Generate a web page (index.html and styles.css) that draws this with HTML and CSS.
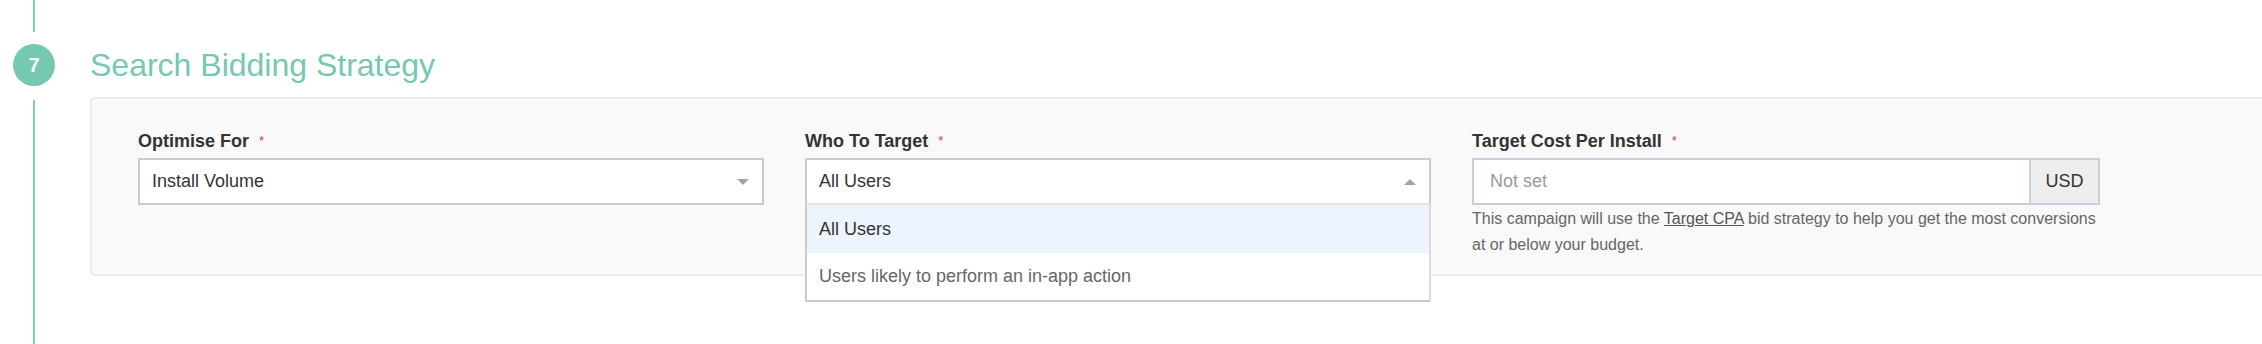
FILE: index.html
```html
<!DOCTYPE html>
<html lang="en">
<head>
  <meta charset="UTF-8">
  <meta name="viewport" content="width=device-width, initial-scale=1.0">
  <title>Search Bidding Strategy</title>
  <link rel="stylesheet" href="styles.css">
</head>
<body>
  <div class="step">
    <div class="rail">
      <span class="rail-line rail-line-top"></span>
      <span class="step-num">7</span>
      <span class="rail-line"></span>
    </div>

    <div class="step-body">
      <h2 class="step-title">Search Bidding Strategy</h2>

      <div class="panel">
        <div class="field">
          <label class="field-label">Optimise For <span class="req">*</span></label>
          <div class="select">
            <span class="select-value">Install Volume</span>
            <span class="caret"></span>
          </div>
        </div>

        <div class="field">
          <label class="field-label">Who To Target <span class="req">*</span></label>
          <div class="select open">
            <span class="select-value">All Users</span>
            <span class="caret up"></span>
            <ul class="menu">
              <li class="menu-item active">All Users</li>
              <li class="menu-item">Users likely to perform an in-app action</li>
            </ul>
          </div>
        </div>

        <div class="field">
          <label class="field-label">Target Cost Per Install <span class="req">*</span></label>
          <div class="input-group">
            <input type="text" class="input" placeholder="Not set">
            <span class="addon">USD</span>
          </div>
          <p class="hint">
            <span>This campaign will use the <a href="#" class="hint-link">Target CPA</a> bid strategy to help you get the most conversions</span>
            <span>at or below your budget.</span>
          </p>
        </div>
      </div>
    </div>
  </div>
</body>
</html>
```

FILE: styles.css
```css
:root {
  --teal: #76c8b2;
  --text: #333;
  --muted: #666;
  --field-border: #cbcbcb;
  --group-border: #c9cedb;
}

body {
  margin: 0;
  background: #fff;
  font-family: "Liberation Sans", Arial, sans-serif;
  color: var(--text);
  overflow: hidden;
}

.step {
  display: flex;
  min-height: 100vh;
}

/* Timeline rail */
.rail {
  width: 68px;
  display: flex;
  flex-direction: column;
  align-items: center;
  flex-shrink: 0;
}

.rail-line {
  width: 2px;
  flex: 1;
  background: #80cbb7;
}

.rail-line-top {
  flex: 0 0 32px;
}

.step-num {
  width: 42px;
  height: 42px;
  margin: 12px 0 14px;
  border-radius: 50%;
  background: var(--teal);
  color: #fff;
  font-size: 20px;
  font-weight: bold;
  display: flex;
  align-items: center;
  justify-content: center;
}

.step-body {
  flex: 1;
  margin-left: 22px;
  padding-top: 47px;
}

.step-title {
  margin: 0 0 14px;
  font-size: 32px;
  font-weight: normal;
  line-height: 36px;
  color: var(--teal);
}

/* Panel */
.panel {
  display: grid;
  grid-template-columns: 626px 626px 628px;
  column-gap: 41px;
  align-items: start;
  padding: 32px 0 16px 46px;
  background: #f9f9f9;
  border: 2px solid #ebebeb;
  border-right: 0;
  border-radius: 5px 0 0 5px;
}

.field-label {
  display: block;
  font-size: 18px;
  font-weight: bold;
  line-height: 20px;
  margin-bottom: 7px;
  color: var(--text);
}

.req {
  color: #d9413a;
  font-size: 13px;
  font-weight: normal;
  vertical-align: top;
  margin-left: 5px;
}

.select {
  position: relative;
  height: 47px;
  box-sizing: border-box;
  display: flex;
  align-items: center;
  justify-content: space-between;
  padding: 0 13px 0 12px;
  background: #fff;
  border: 2px solid var(--field-border);
  font-size: 18px;
}

.select.open {
  border-bottom-color: #e4e4e4;
}

.caret {
  width: 0;
  height: 0;
  border-left: 6px solid transparent;
  border-right: 6px solid transparent;
  border-top: 6px solid #a3a3a3;
}

.caret.up {
  border-top: 0;
  border-bottom: 6px solid #a3a3a3;
}

.menu {
  position: absolute;
  top: 100%;
  left: -2px;
  right: -2px;
  margin: 2px 0 0;
  padding: 0;
  list-style: none;
  background: #fff;
  border: 2px solid var(--field-border);
  border-top: 0;
  border-right-color: #dcdcdc;
  z-index: 2;
}

.menu-item {
  height: 47px;
  line-height: 47px;
  padding-left: 12px;
  color: var(--muted);
}

.menu-item.active {
  height: 48px;
  line-height: 48px;
  background: #edf4fd;
  color: var(--text);
}

/* Currency input */
.input-group {
  display: flex;
  height: 47px;
}

.input {
  flex: 1;
  min-width: 0;
  box-sizing: border-box;
  padding: 0 16px;
  border: 2px solid var(--group-border);
  border-right: 0;
  background: #fff;
  font-family: inherit;
  font-size: 18px;
  color: var(--text);
  outline: none;
}

.input::placeholder {
  color: #9a9a9a;
}

.addon {
  width: 71px;
  box-sizing: border-box;
  display: flex;
  align-items: center;
  justify-content: center;
  background: #eee;
  border: 2px solid var(--group-border);
  font-size: 18px;
  color: var(--text);
}

.hint {
  margin: 1px -12px 0 0;
  font-size: 16px;
  line-height: 26px;
  color: var(--muted);
}

.hint span {
  display: block;
}

.hint-link {
  color: #555;
  text-decoration: underline;
}
```
